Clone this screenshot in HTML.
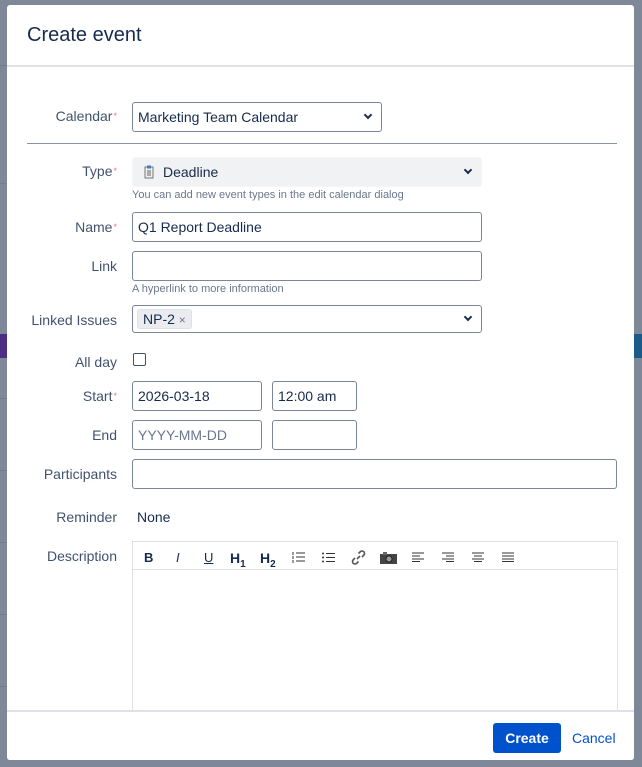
<!DOCTYPE html>
<html><head><style>
body{margin:0;width:642px;height:767px;background:#7f8898;position:relative;overflow:hidden;font-family:"Liberation Sans",sans-serif;color:#172b4d}
.bg-line{position:absolute;height:1px;background:#737b8b}
#dlg{position:absolute;left:7px;top:5px;width:627px;height:755px;background:#fff;border-radius:3px;overflow:hidden}
.a{position:absolute}
.lbl{position:absolute;font-size:14px;color:#42526e;text-align:right;width:110px;left:0}
.req{color:#e5796a;font-size:9px;vertical-align:2px;margin-left:1px}
.inp{position:absolute;border:1px solid #7a869a;border-radius:3px;height:29px;box-sizing:border-box;font-size:14px;padding:6px 5px;color:#172b4d;background:#fff}
.hint{position:absolute;font-size:11px;color:#6b778c}
.chev{position:absolute;right:10px;top:9px;width:4px;height:4px;border-right:2px solid #172b4d;border-bottom:2px solid #172b4d;transform:rotate(45deg)}
.tb{position:absolute;top:8px;font-size:13px;color:#172b4d}
</style></head><body>
<div class="bg-line" style="left:0;top:65px;width:7px"></div>
<div class="bg-line" style="left:0;top:183px;width:7px"></div>
<div class="bg-line" style="left:0;top:398px;width:7px"></div>
<div class="bg-line" style="left:0;top:470px;width:7px"></div>
<div class="bg-line" style="left:0;top:542px;width:7px"></div>
<div class="bg-line" style="left:0;top:614px;width:7px"></div>
<div class="bg-line" style="left:0;top:686px;width:7px"></div>
<div class="a" style="left:0;top:334px;width:7px;height:24px;background:#4b2e83"></div>
<div class="a" style="left:634px;top:334px;width:8px;height:24px;background:#1c5a8a"></div>
<div id="dlg">
 <div class="a" style="left:20px;top:19px;font-size:20px;color:#172b4d">Create event</div>
 <div class="a" style="left:0;top:60px;width:627px;height:2px;background:#dfe1e6"></div>

 <div class="lbl" style="top:103px">Calendar<span class="req">*</span></div>
 <div class="inp" style="left:125px;top:97px;width:250px;height:30px">Marketing Team Calendar<div class="chev"></div></div>
 <div class="a" style="left:20px;top:138px;width:590px;height:1px;background:#8993a4"></div>

 <div class="lbl" style="top:158px">Type<span class="req">*</span></div>
 <div class="inp" style="left:125px;top:152px;width:350px;height:30px;border-color:#f4f5f7;background:#f1f2f4;padding-left:30px">Deadline<div class="chev"></div>
  <svg class="a" style="left:11px;top:7px" width="10" height="14"><rect x="1" y="2" width="8" height="11" fill="#eee" stroke="#777"/><rect x="3" y="0.5" width="4" height="3" fill="#3d7cc9"/><path d="M3 6h4M3 8h4M3 10h4" stroke="#666"/></svg></div>
 <div class="hint" style="left:125px;top:184px">You can add new event types in the edit calendar dialog</div>

 <div class="lbl" style="top:214px">Name<span class="req">*</span></div>
 <div class="inp" style="left:125px;top:207px;width:350px;height:30px">Q1 Report Deadline</div>

 <div class="lbl" style="top:253px">Link</div>
 <div class="inp" style="left:125px;top:246px;width:350px;height:30px"></div>
 <div class="hint" style="left:125px;top:278px">A hyperlink to more information</div>

 <div class="lbl" style="top:307px">Linked Issues</div>
 <div class="inp" style="left:125px;top:300px;width:350px;height:28px;padding:3px 4px"><span style="display:inline-block;background:#ebecf0;border:1px solid #dfe1e6;border-radius:3px;padding:1px 5px;font-size:14px">NP-2 <span style="color:#6b778c;font-size:12px">×</span></span><div class="chev" style="top:8px"></div></div>

 <div class="lbl" style="top:349px">All day</div>
 <div class="a" style="left:126px;top:348px;width:11px;height:11px;border:1px solid #42526e;border-radius:2px"></div>

 <div class="lbl" style="top:383px">Start<span class="req">*</span></div>
 <div class="inp" style="left:125px;top:376px;width:130px;height:30px">2026-03-18</div>
 <div class="inp" style="left:265px;top:376px;width:85px;height:30px">12:00 am</div>

 <div class="lbl" style="top:422px">End</div>
 <div class="inp" style="left:125px;top:415px;width:130px;height:30px;color:#6b778c">YYYY-MM-DD</div>
 <div class="inp" style="left:265px;top:415px;width:85px;height:30px"></div>

 <div class="lbl" style="top:461px">Participants</div>
 <div class="inp" style="left:125px;top:454px;width:485px;height:30px"></div>

 <div class="lbl" style="top:504px">Reminder</div>
 <div class="a" style="left:130px;top:504px;font-size:14px">None</div>

 <div class="lbl" style="top:543px">Description</div>
 <div class="a" style="left:125px;top:536px;width:484px;height:230px;border:1px solid #dfe1e6">
  <div class="a" style="left:0;top:27px;width:484px;height:1px;background:#dfe1e6"></div>
  <div class="tb" style="left:11px;font-weight:bold">B</div>
  <div class="tb" style="left:43px;font-style:italic">I</div>
  <div class="tb" style="left:71px;text-decoration:underline">U</div>
  <div class="tb" style="left:97px;font-weight:bold;font-size:14px">H<sub style="font-size:10px">1</sub></div>
  <div class="tb" style="left:127px;font-weight:bold;font-size:14px">H<sub style="font-size:10px">2</sub></div>
  <svg class="a" style="left:159px;top:10px" width="13" height="11"><path d="M4 1h9M4 5h9M4 9h9M1 0v3M1 4v3M1 8v3" stroke="#333"/></svg>
  <svg class="a" style="left:189px;top:10px" width="13" height="11"><path d="M4 1.5h9M4 5.5h9M4 9.5h9" stroke="#333"/><circle cx="1" cy="1.5" r="1" fill="#333"/><circle cx="1" cy="5.5" r="1" fill="#333"/><circle cx="1" cy="9.5" r="1" fill="#333"/></svg>
  <svg class="a" style="left:217px;top:7px" width="17" height="17"><path d="M7 10l3-3M5 9l-2 2a2.5 2.5 0 0 0 3.5 3.5l2-2M12 8l2-2a2.5 2.5 0 0 0-3.5-3.5l-2 2" stroke="#555" stroke-width="1.6" fill="none"/></svg>
  <svg class="a" style="left:247px;top:10px" width="17" height="12"><rect x="0" y="2" width="17" height="10" fill="#444"/><rect x="3" y="0" width="4" height="3" fill="#666"/><circle cx="9" cy="7" r="3" fill="#999" stroke="#222"/></svg>
  <svg class="a" style="left:279px;top:10px" width="12" height="10"><path d="M0 1h12M0 4h8M0 7h12M0 9.5h8" stroke="#333"/></svg>
  <svg class="a" style="left:309px;top:10px" width="12" height="10"><path d="M0 1h12M4 4h8M0 7h12M4 9.5h8" stroke="#333"/></svg>
  <svg class="a" style="left:339px;top:10px" width="12" height="10"><path d="M0 1h12M2 4h8M0 7h12M2 9.5h8" stroke="#333"/></svg>
  <svg class="a" style="left:369px;top:10px" width="12" height="10"><path d="M0 1h12M0 4h12M0 7h12M0 9.5h12" stroke="#333"/></svg>
 </div>

 <div class="a" style="left:0;top:705px;width:627px;height:50px;background:#fff;border-top:2px solid #dfe1e6"></div>
 <div class="a" style="left:486px;top:718px;width:68px;height:30px;background:#0052cc;border-radius:3px;color:#fff;font-weight:bold;font-size:14px;text-align:center;line-height:30px">Create</div>
 <div class="a" style="left:565px;top:725px;color:#0052cc;font-size:14px">Cancel</div>
</div>
</body></html>
